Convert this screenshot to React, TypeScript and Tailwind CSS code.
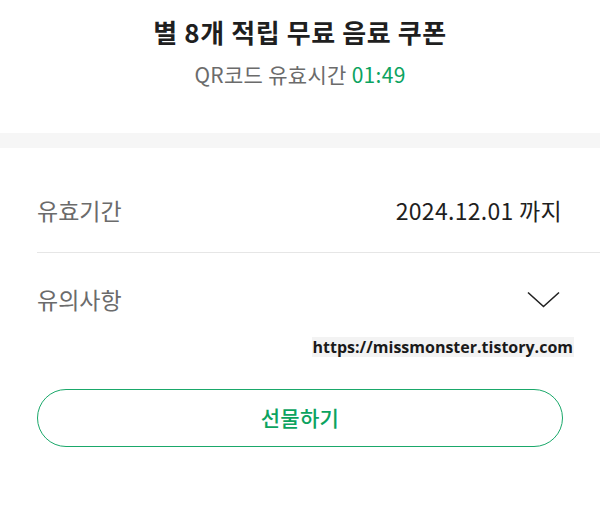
export default function App() {
  return (
    <div
      className="w-[600px] h-[510px] bg-white overflow-hidden"
      style={{ fontFamily: '"Noto Sans CJK KR", "Noto Sans", sans-serif' }}
    >
      {/* header */}
      <div className="flex flex-col items-center pt-[13px] h-[133px]">
        <h1 className="text-[26px] leading-[38px] font-bold text-[#1f1f1f] tracking-[0.6px]">
          별 8개 적립 무료 음료 쿠폰
        </h1>
        <p className="mt-[8px] text-[21px] leading-[30px] text-[#6b6b6b] tracking-[0.3px]">
          QR코드 유효시간 <span className="text-[#0ba360]">01:49</span>
        </p>
      </div>

      <div className="h-[15px] bg-[#f6f6f6]" />

      {/* info rows */}
      <div className="pl-[37px]">
        <div className="flex items-center justify-between pr-[38px] h-[105px] border-b border-[#e6e6e6]">
          <span className="text-[23px] text-[#6b6b6b] pt-[20px]">유효기간</span>
          <span className="text-[23px] text-[#1f1f1f] pt-[20px] tracking-[0.3px]">2024.12.01 까지</span>
        </div>
        <div className="flex items-center justify-between pr-[40px] h-[92px]">
          <span className="text-[23px] text-[#6b6b6b]">유의사항</span>
          <svg width="33" height="17" viewBox="0 0 33 17" fill="none">
            <path d="M1 1.5 L16.5 15.5 L32 1.5" stroke="#222" strokeWidth="1.6" />
          </svg>
        </div>
      </div>

      <div className="flex justify-end pr-[26px] -mt-[8px]">
        <span
          className="bg-[#f3f3f3] px-[1px] text-[16px] leading-[20px] font-bold text-[#1a1a1a]"
          style={{ fontFamily: '"Open Sans", "Noto Sans", sans-serif' }}
        >
          https://missmonster.tistory.com
        </span>
      </div>

      {/* button */}
      <div className="px-[37px] mt-[32px]">
        <button className="w-full h-[58px] rounded-full border border-[#1aa86a] text-[21px] text-[#0ba360] font-medium flex items-center justify-center tracking-[0.3px]">
          선물하기
        </button>
      </div>
    </div>
  );
}
